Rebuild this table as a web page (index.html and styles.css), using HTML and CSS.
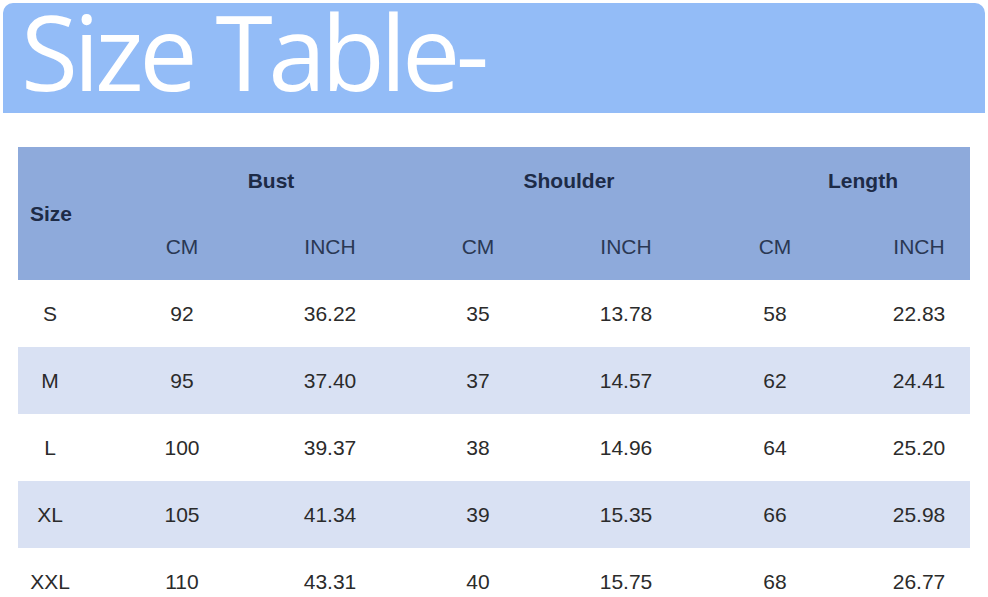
FILE: index.html
```html
<!DOCTYPE html>
<html>
<head>
<meta charset="utf-8">
<link rel="stylesheet" href="styles.css">
</head>
<body>
<div class="page">
  <div class="banner"><h1 class="title">Size Table-</h1></div>
  <div class="table">
    <div class="head">
      <div class="h-size">Size</div>
      <div class="h-group">Bust</div>
      <div class="h-group">Shoulder</div>
      <div class="h-group">Length</div>
      <div class="h-unit">CM</div>
      <div class="h-unit">INCH</div>
      <div class="h-unit">CM</div>
      <div class="h-unit">INCH</div>
      <div class="h-unit">CM</div>
      <div class="h-unit">INCH</div>
    </div>
    <div class="row"><div>S</div><div>92</div><div>36.22</div><div>35</div><div>13.78</div><div>58</div><div>22.83</div></div>
    <div class="row alt"><div>M</div><div>95</div><div>37.40</div><div>37</div><div>14.57</div><div>62</div><div>24.41</div></div>
    <div class="row"><div>L</div><div>100</div><div>39.37</div><div>38</div><div>14.96</div><div>64</div><div>25.20</div></div>
    <div class="row alt"><div>XL</div><div>105</div><div>41.34</div><div>39</div><div>15.35</div><div>66</div><div>25.98</div></div>
    <div class="row"><div>XXL</div><div>110</div><div>43.31</div><div>40</div><div>15.75</div><div>68</div><div>26.77</div></div>
  </div>
</div>
</body>
</html>
```
FILE: styles.css
```css
html, body {
  margin: 0;
  padding: 0;
  background: #ffffff;
}
.page {
  padding: 3px 3px 0 3px;
  font-family: "Liberation Sans", Arial, sans-serif;
}
.banner {
  height: 110px;
  background: #93bcf7;
  border-radius: 10px 10px 0 0;
}
.title {
  margin: 0;
  padding: 0 0 0 18px;
  font-family: "Open Sans", "Noto Sans", sans-serif;
  font-weight: 400;
  font-size: 104px;
  line-height: 95px;
  color: #ffffff;
  letter-spacing: -4.6px;
  white-space: nowrap;
}
.table {
  margin: 34px 0 0 15px;
  width: 952px;
}
.head, .row {
  display: grid;
  grid-template-columns: 64px 200px 96px 200px 96px 202px 86px;
  padding-right: 8px;
  font-size: 21px;
}
.head {
  background: #8eaadb;
  grid-template-rows: 67px 66px;
  color: #1d2b47;
}
.h-size {
  grid-row: 1 / span 2;
  grid-column: 1;
  align-self: center;
  padding-left: 12px;
  font-weight: bold;
}
.h-group {
  grid-row: 1;
  grid-column: span 2;
  font-weight: bold;
  text-align: center;
  align-self: center;
  padding-left: 86px;
}
.h-unit {
  grid-row: 2;
  text-align: center;
  align-self: center;
  color: #2a3853;
}
.h-group:nth-child(2) { grid-column: 2 / span 2; padding-left: 82px; }
.h-group:nth-child(3) { grid-column: 4 / span 2; }
.h-group:nth-child(4) { grid-column: 6 / span 2; padding-left: 90px; }
.row {
  height: 67px;
  align-items: center;
  color: #2b2b2b;
  text-align: center;
}
.row.alt {
  background: #d9e1f3;
}
```
